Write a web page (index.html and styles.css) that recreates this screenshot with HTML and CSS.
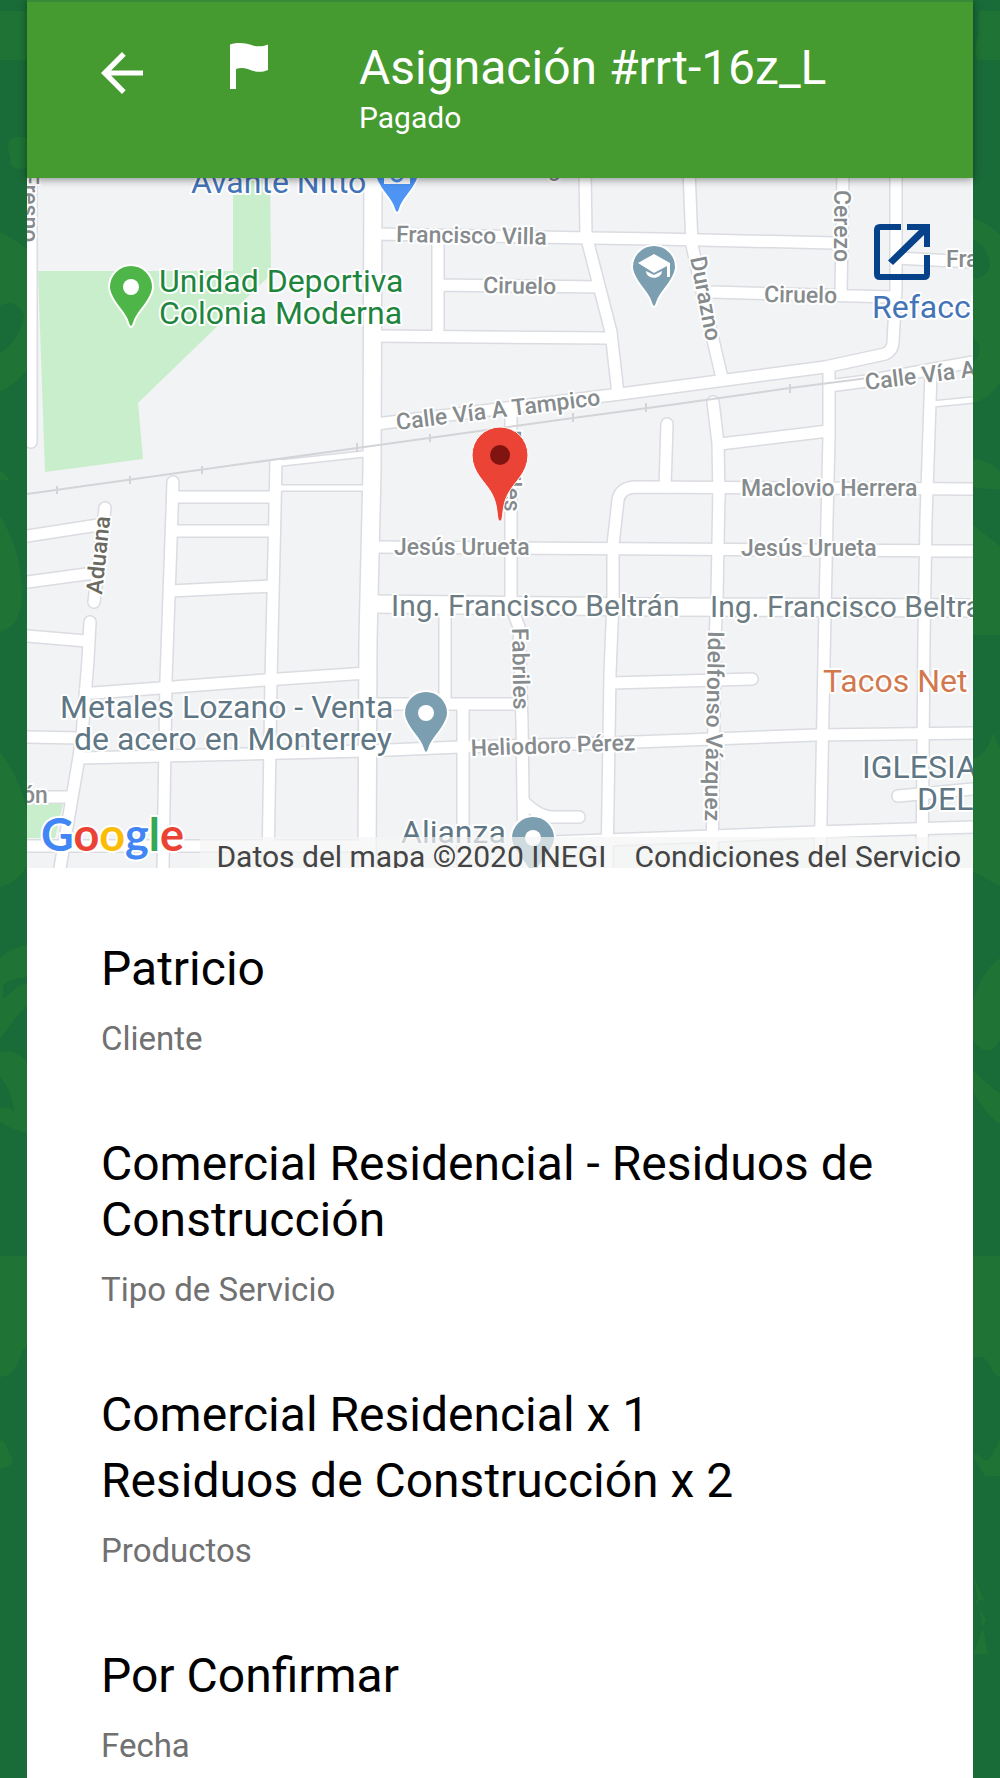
FILE: index.html
```html
<!DOCTYPE html>
<html lang="es">
<head>
<meta charset="utf-8">
<meta name="viewport" content="width=device-width, initial-scale=1">
<title>Asignación #rrt-16z_L</title>
<link rel="stylesheet" href="styles.css">
</head>
<body>
<svg class="backdrop" viewBox="0 0 1000 1778" preserveAspectRatio="none" aria-hidden="true">
  <g fill="#1e7335">
    <path d="M0 11H27V60H0ZM27 139C17 134 8 138 8 146C8 153 11 156 10 163C14 171 23 170 27 166Z"/>
    <path d="M0 232C12 238 22 244 27 250V370C18 380 9 389 0 391ZM0 470L10 480H0ZM0 516C12 534 22 562 22 592C22 616 14 628 0 632ZM0 752C12 768 20 782 27 810V866C18 880 9 885 0 887Z"/>
    <path d="M0 958C8 950 18 947 27 945V1006C17 1014 8 1028 0 1039ZM0 1052C12 1050 20 1053 27 1062V1133C18 1130 8 1128 0 1122ZM0 1256H27V1346C18 1352 20 1376 0 1377ZM0 1440C8 1440 6 1452 12 1456C14 1464 8 1468 0 1468Z"/>
    <path d="M979 11H1000V60H979C974 60 975 40 979 36ZM973 218C985 222 994 228 1000 236V382C992 394 984 400 973 403ZM973 459C984 460 994 464 1000 472V489C992 490 982 488 973 487ZM973 525L1000 546V635H973ZM973 758C982 758 988 748 993 733L1000 748V886C992 882 982 876 973 872Z"/>
    <path d="M1000 958C988 966 978 984 973 1000V1040C984 1056 994 1052 1000 1040ZM973 1070C984 1080 994 1090 1000 1093V1124C990 1118 980 1104 973 1092ZM973 1256H1000V1377C988 1372 990 1352 973 1358ZM973 1456C980 1450 984 1466 990 1458L1000 1440V1476H985ZM973 1574L984 1600H975L986 1620L973 1654H988Z"/>
  </g>
  <g fill="#196b38">
    <path d="M0 306C10 300 20 304 24 316C20 336 8 350 0 352ZM3 986C12 976 22 980 27 976V984C18 982 10 996 3 998ZM0 1077C8 1086 13 1096 14 1113C9 1104 6 1110 0 1108ZM973 240C984 244 990 256 990 268C984 276 980 280 973 278ZM973 338C982 344 982 356 973 362Z"/>
  </g>
</svg>

<main class="screen">
  <header class="appbar">
    <button class="icon-button back" type="button" aria-label="Volver">
      <svg viewBox="0 0 42 42"><path d="M42 18.4H10.1L24.7 3.7 21 0 0 21 21 42 24.7 38.300 10.100 23.600H42Z" fill="#fff"/></svg>
    </button>
    <button class="icon-button flag" type="button" aria-label="Marcar">
      <svg viewBox="0 0 38 46"><path d="M0 1.500C11-1.500 17 1 23 2.500C28 4 33 3.500 38 1.500V27C31 30 25 29 19 26.500C14 24.500 10 24.500 6 26V46H0Z" fill="#fff"/></svg>
    </button>
    <div class="heading">
      <h1>Asignación #rrt-16z_L</h1>
      <p>Pagado</p>
    </div>
  </header>

  <section class="map" aria-label="Mapa">
    <svg class="map-canvas" viewBox="27 178 946 690" role="img" aria-label="Mapa de la colonia">
      <defs>
        <g id="roads" fill="none" stroke-linejoin="round">
          <path d="M31 170V442" stroke-linecap="round"/>
          <path d="M376 234L590 238 660 239 835 243M438 236V336M438 285L600 287M376 336L608 338"/>
          <path d="M585 170L586 235 611 332 618 394M376 424L620 394 825 367 885 354Q893 350 893 342L896 290V170"/>
          <path d="M689 170L692 245 706 310 722 378M711 292L893 297M843 170L841 294M896 258L973 262M829 386L867 381 973 362"/>
          <path d="M829 370L829 437 827 520 824 660 820 868M719 500L718 443 713 402" stroke-linecap="round"/>
          <path d="M719 490L717 597 715 640 712 868M667 424L665 487" stroke-linecap="round"/>
          <path d="M720 444L828 431M973 489L635 487Q620 488 618 500L613 545V600L610 673 607 868"/>
          <path d="M931 372L926 520 924 640 922 868M376 547L660 549 973 551"/>
          <path d="M511 412V606L519 627 522 723 524 868M445 606V704M374 704H520M463 704V868"/>
          <path d="M524 802Q540 817 552 817H579" stroke-linecap="round"/>
          <path d="M80 694L265 680 367 673M27 737L80 738M80 758L365 751 460 747 610 743 816 735 973 733"/>
          <path d="M90 622L88 660 82 735 79 757 60 868M105 508L94 602" stroke-linecap="round"/>
          <path d="M27 536L98 525M27 582L94 573M27 636L86 641M173 482L172 512 166 680 163 868" stroke-linecap="round"/>
          <path d="M173 497H274M173 531H274M170 591L272 586M276 460L275 510 271 680 268 868"/>
          <path d="M27 797H72M27 846H365M524 843L660 838 816 832 973 827"/>
          <path d="M612 683L752 679M898 796L973 789" stroke-linecap="round"/>
        </g>
        <g id="wide-roads" fill="none">
          <path d="M373 170L372 470 368 640 367 868"/>
          <path d="M372 604L660 607 973 608"/>
        </g>
        <g id="lanes" fill="none">
          <path d="M272 464L364 454M280 488H364M932 404L973 400"/>
        </g>
        <path id="pin" d="M0 40C-3 40-2 35-6 29C-9 24-12 21-16 15C-20 9-22 5-22 0A22 22 0 1 1 22 0C22 5 20 9 16 15C12 21 9 24 6 29C2 35 3 40 0 40Z"/>
      </defs>

      <rect x="27" y="178" width="946" height="690" fill="#f1f3f5"/>
      <path d="M233 178H270L271 267Q271 276 263 282L138 403 143 459 45 472 38 271H233ZM27 803H63L55 838H27Z" fill="#c9eecb"/>

      <use href="#roads" stroke="#dadce1" stroke-width="14"/>
      <use href="#wide-roads" stroke="#dadce1" stroke-width="20"/>
      <use href="#lanes" stroke="#dadce1" stroke-width="8"/>
      <use href="#roads" stroke="#fff" stroke-width="11"/>
      <use href="#wide-roads" stroke="#fff" stroke-width="17"/>
      <use href="#lanes" stroke="#fff" stroke-width="5"/>

      <path d="M27 494L350 449 573 418 670 405 790 388 868 378M57 486V494M130 476V484M202 466V474M357 443V452M430 434V442M573 413V422M646 403V412M790 384V393" fill="none" stroke="#d3d4d8" stroke-width="2"/>

      <g class="street">
        <text transform="translate(396 242) rotate(1)">Francisco Villa</text>
        <text transform="translate(483 293) rotate(1)">Ciruelo</text>
        <text transform="translate(764 302) rotate(1)">Ciruelo</text>
        <text transform="translate(397 430) rotate(-7)">Calle Vía A Tampico</text>
        <text transform="translate(866 390) rotate(-7)">Calle Vía A Tampico</text>
        <text x="741" y="496">Maclovio Herrera</text>
        <text x="394" y="555">Jesús Urueta</text>
        <text x="741" y="556">Jesús Urueta</text>
        <text transform="translate(471 756) rotate(-2)">Heliodoro Pérez</text>
        <text transform="translate(512 628) rotate(89)">Fabriles</text>
        <text transform="translate(504 430) rotate(90)">Fabriles</text>
        <text transform="translate(708 631) rotate(91)">Idelfonso Vázquez</text>
        <text transform="translate(834 190) rotate(90)">Cerezo</text>
        <text transform="translate(690 258) rotate(79)">Durazno</text>
        <text transform="translate(22 172) rotate(90)">Fresno</text>
        <text x="946" y="267">Francisco Villa</text>
        <text x="22" y="803">ón</text>
        <text x="548" y="176">g</text>
        <text class="road-name" transform="translate(102 595) rotate(-84)">Aduana</text>
      </g>

      <g class="avenue">
        <text x="391" y="616">Ing. Francisco Beltrán</text>
        <text x="710" y="617">Ing. Francisco Beltrán</text>
      </g>

      <g class="place">
        <text class="shop" x="191" y="193">Avante Nitto</text>
        <text class="shop" x="872" y="318">Refacciones</text>
        <text class="park" x="159" y="292">Unidad Deportiva</text>
        <text class="park" x="159" y="324">Colonia Moderna</text>
        <text class="food" x="823" y="692">Tacos Net</text>
        <text x="60" y="718">Metales Lozano - Venta</text>
        <text x="74" y="750">de acero en Monterrey</text>
        <text x="401" y="843">Alianza</text>
        <text x="862" y="778">IGLESIA</text>
        <text x="917" y="810">DEL</text>
      </g>

      <g stroke="#fff" stroke-width="2">
        <use href="#pin" x="397" y="173" fill="#4d94f5"/>
        <use href="#pin" x="131" y="287" fill="#4eb648"/>
        <use href="#pin" x="654" y="267" fill="#7b9eb0"/>
        <use href="#pin" x="426" y="713" fill="#7b9eb0"/>
        <use href="#pin" x="533" y="838" fill="#7b9eb0"/>
      </g>
      <g fill="#fff">
        <path d="M384 174H410V184H384Z"/>
        <circle cx="131" cy="287" r="8"/>
        <circle cx="426" cy="713" r="8"/>
        <circle cx="533" cy="838" r="8"/>
        <path d="M638 263L654 254 670 263V277H667V266L654 273ZM646 271L654 275 662 271C662 280 646 280 646 271Z"/>
      </g>
      <path d="M392 176A5 5 0 0 0 402 176" fill="none" stroke="#4d94f5" stroke-width="3"/>
      <path d="M500 521C496 521 499 507 492 494C486 482 472 473 472 455A28 28 0 1 1 528 455C528 473 514 482 508 494C501 507 504 521 500 521Z" fill="#eb4335" stroke="#fff" stroke-width="1"/>
      <circle cx="500" cy="455" r="10" fill="#811411"/>

      <text class="logo" x="41" y="851"><tspan fill="#4285f4">G</tspan><tspan fill="#ea4335">o</tspan><tspan fill="#fbbc05">o</tspan><tspan fill="#4285f4">g</tspan><tspan fill="#34a853">l</tspan><tspan fill="#ea4335">e</tspan></text>
    </svg>
    <button class="icon-button open" type="button" aria-label="Abrir en mapas">
      <svg viewBox="0 0 56 56"><path d="M27 0V6H6V50H50V31H56V50Q56 56 50 56H6Q0 56 0 50V6Q0 0 6 0ZM33 0H56V23H50V11L19 41 14 36.500 45 6H33Z" fill="#05428a"/></svg>
    </button>
    <div class="attribution">
      <span>Datos del mapa ©2020 INEGI</span>
      <a href="#condiciones">Condiciones del Servicio</a>
    </div>
  </section>

  <dl class="details">
    <div class="detail">
      <dt>Cliente</dt>
      <dd>Patricio</dd>
    </div>
    <div class="detail">
      <dt>Tipo de Servicio</dt>
      <dd>Comercial Residencial - Residuos de Construcción</dd>
    </div>
    <div class="detail products">
      <dt>Productos</dt>
      <dd>Comercial Residencial x 1</dd>
      <dd>Residuos de Construcción x 2</dd>
    </div>
    <div class="detail">
      <dt>Fecha</dt>
      <dd>Por Confirmar</dd>
    </div>
  </dl>
</main>
</body>
</html>
```
FILE: styles.css
```css
* {
  box-sizing: border-box;
}

body {
  margin: 0;
  position: relative;
  min-height: 100vh;
  background: #196b38;
  color: #000;
  font-family: Roboto, "Liberation Sans", sans-serif;
}

.backdrop {
  position: absolute;
  inset: 0;
  width: 100%;
  height: 100%;
}

.screen {
  position: relative;
  margin: 0 27px;
  min-height: 100vh;
  background: #fff;
}

.appbar {
  position: relative;
  z-index: 1;
  display: flex;
  align-items: flex-start;
  min-height: 178px;
  padding: 38px 24px 32px 74px;
  border-top: 2px solid #388a36;
  background: #459a30;
  box-shadow: 0 2px 8px rgba(0, 0, 0, 0.4);
  color: #fff;
}

.icon-button {
  flex: none;
  padding: 0;
  border: 0;
  background: none;
  cursor: pointer;
}

.icon-button svg {
  display: block;
  width: 100%;
}

.back {
  width: 42px;
  margin-top: 12px;
}

.flag {
  width: 38px;
  margin: 3px 91px 0 87px;
}

.heading h1,
.heading p {
  margin: 0;
  font-weight: 400;
}

.heading h1 {
  font-size: 48px;
  line-height: 56px;
}

.heading p {
  font-size: 30px;
  line-height: 44px;
}

.map {
  position: relative;
  overflow: hidden;
}

.map-canvas {
  display: block;
  width: 100%;
  height: auto;
}

.map-canvas text {
  paint-order: stroke;
  stroke: #fff;
  stroke-width: 4px;
  stroke-linejoin: round;
}

.street {
  fill: #868b8e;
  font-size: 23px;
  font-weight: 500;
}

.road-name {
  fill: #6b6a60;
}

.avenue {
  fill: #6d7b82;
  font-size: 30px;
}

.place {
  fill: #5f7785;
  font-size: 32px;
}

.shop {
  fill: #4474b8;
}

.park {
  fill: #1e853e;
}

.food {
  fill: #d2784f;
}

.logo {
  font-family: Lato, sans-serif;
  font-size: 45px;
  font-weight: 700;
}

.open {
  position: absolute;
  top: 46px;
  right: 43px;
  width: 56px;
}

.attribution {
  position: absolute;
  right: 0;
  bottom: 0;
  display: flex;
  gap: 28px;
  height: 31px;
  padding: 5px 12px 0 16px;
  overflow: hidden;
  background: rgba(245, 245, 245, 0.7);
  color: #444;
  font-size: 30px;
  line-height: 30px;
  white-space: nowrap;
}

.attribution a {
  color: inherit;
  text-decoration: none;
}

.details {
  display: flex;
  flex-direction: column;
  gap: 77px;
  margin: 0;
  padding: 73px 74px 0;
}

.detail {
  display: flex;
  flex-direction: column;
}

.detail dt {
  order: 1;
  margin-top: 22px;
  color: #717171;
  font-size: 33px;
  line-height: 40px;
}

.detail dd {
  margin: 0;
  font-size: 48px;
  line-height: 56px;
}

.products {
  gap: 10px;
}

.products dt {
  margin-top: 12px;
}
```
